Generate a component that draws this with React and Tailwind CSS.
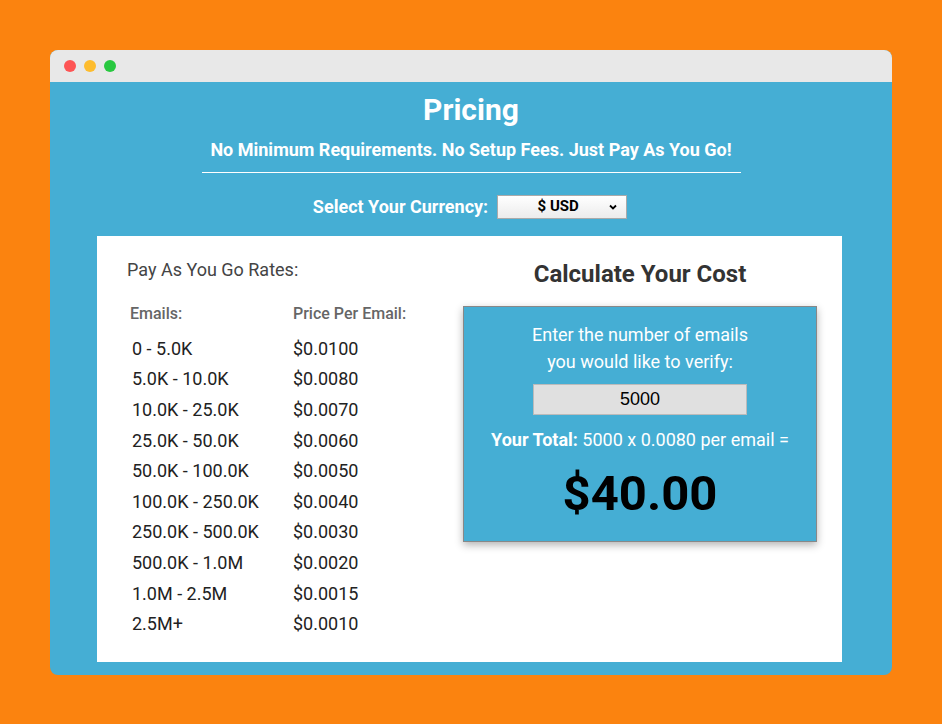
const rates = [
  ['0 - 5.0K', '$0.0100'],
  ['5.0K - 10.0K', '$0.0080'],
  ['10.0K - 25.0K', '$0.0070'],
  ['25.0K - 50.0K', '$0.0060'],
  ['50.0K - 100.0K', '$0.0050'],
  ['100.0K - 250.0K', '$0.0040'],
  ['250.0K - 500.0K', '$0.0030'],
  ['500.0K - 1.0M', '$0.0020'],
  ['1.0M - 2.5M', '$0.0015'],
  ['2.5M+', '$0.0010']
]

export default function App() {
  return (
    <div className="min-h-[724px] w-full bg-[#fb830f] px-[50px] pt-[50px] pb-[50px] font-['Roboto',sans-serif]">
      <div className="overflow-hidden rounded-lg bg-[#45aed4]">
        <div className="flex h-8 items-center gap-2 bg-[#e8e8e8] pl-[14px]">
          <span className="h-3 w-3 rounded-full bg-[#fd5454]" />
          <span className="h-3 w-3 rounded-full bg-[#fdbc2e]" />
          <span className="h-3 w-3 rounded-full bg-[#28c840]" />
        </div>

        <div className="flex flex-col items-center pt-[9px]">
          <h1 className="text-[30px] font-bold leading-[38px] text-white">Pricing</h1>
          <p className="mt-[10px] text-[18px] font-bold leading-[22px] text-white">
            No Minimum Requirements. No Setup Fees. Just Pay As You Go!
          </p>
          <div className="mt-[11px] h-px w-[539px] bg-white" />
          <div className="mt-[20px] flex items-center gap-[9px] pr-[2px]">
            <span className="text-[18px] font-bold text-white">Select Your Currency:</span>
            <div className="flex h-6 w-[130px] items-center border border-[#aaa] bg-gradient-to-b from-white to-[#ececec] pr-2">
              <span className="flex-1 pl-[10px] text-center text-[15px] font-bold text-black">$ USD</span>
              <svg width="10" height="10" viewBox="0 0 10 10">
                <path d="M2 3.5 L5 6.5 L8 3.5" fill="none" stroke="#000" strokeWidth="1.8" />
              </svg>
            </div>
          </div>
        </div>

        <div className="mt-[16px] mb-[13px] ml-[47px] flex h-[426px] w-[745px] bg-white">
          <div className="w-[366px] pl-[30px] pt-[22px]">
            <h2 className="text-[18px] leading-[24px] text-[#444]">Pay As You Go Rates:</h2>
            <div className="mt-[22px] grid grid-cols-[163px_1fr] pl-[3px] text-[16px] font-medium leading-[20px] text-[#666]">
              <span>Emails:</span>
              <span>Price Per Email:</span>
            </div>
            <div className="mt-[9px]">
              {rates.map(([range, price]) => (
                <div key={range} className="grid h-[30.6px] grid-cols-[161px_1fr] items-center pl-[5px] text-[18px] text-[#222]">
                  <span>{range}</span>
                  <span>{price}</span>
                </div>
              ))}
            </div>
          </div>

          <div className="flex-1 pr-[25px] pt-[23px]">
            <h2 className="text-center text-[24px] font-bold leading-[30px] text-[#333]">Calculate Your Cost</h2>
            <div className="mt-[17px] flex h-[236px] flex-col items-center border border-[#888] bg-[#45aed4] pt-[14px] shadow-[0_3px_8px_rgba(0,0,0,0.3)]">
              <p className="text-center text-[18px] leading-[27px] text-white">
                Enter the number of emails
                <br />
                you would like to verify:
              </p>
              <div className="mt-[9px] flex h-[31px] w-[214px] items-center justify-center border border-[#bbb] bg-[#e0e0e0] font-['Liberation_Sans',sans-serif] text-[18px] text-black">
                5000
              </div>
              <p className="mt-[14px] text-[18px] leading-[22px] text-white">
                <span className="font-bold">Your Total:</span> 5000 x 0.0080 per email =
              </p>
              <p className="mt-[17px] text-[49px] font-bold leading-[52px] text-black">$40.00</p>
            </div>
          </div>
        </div>
      </div>
    </div>
  )
}
